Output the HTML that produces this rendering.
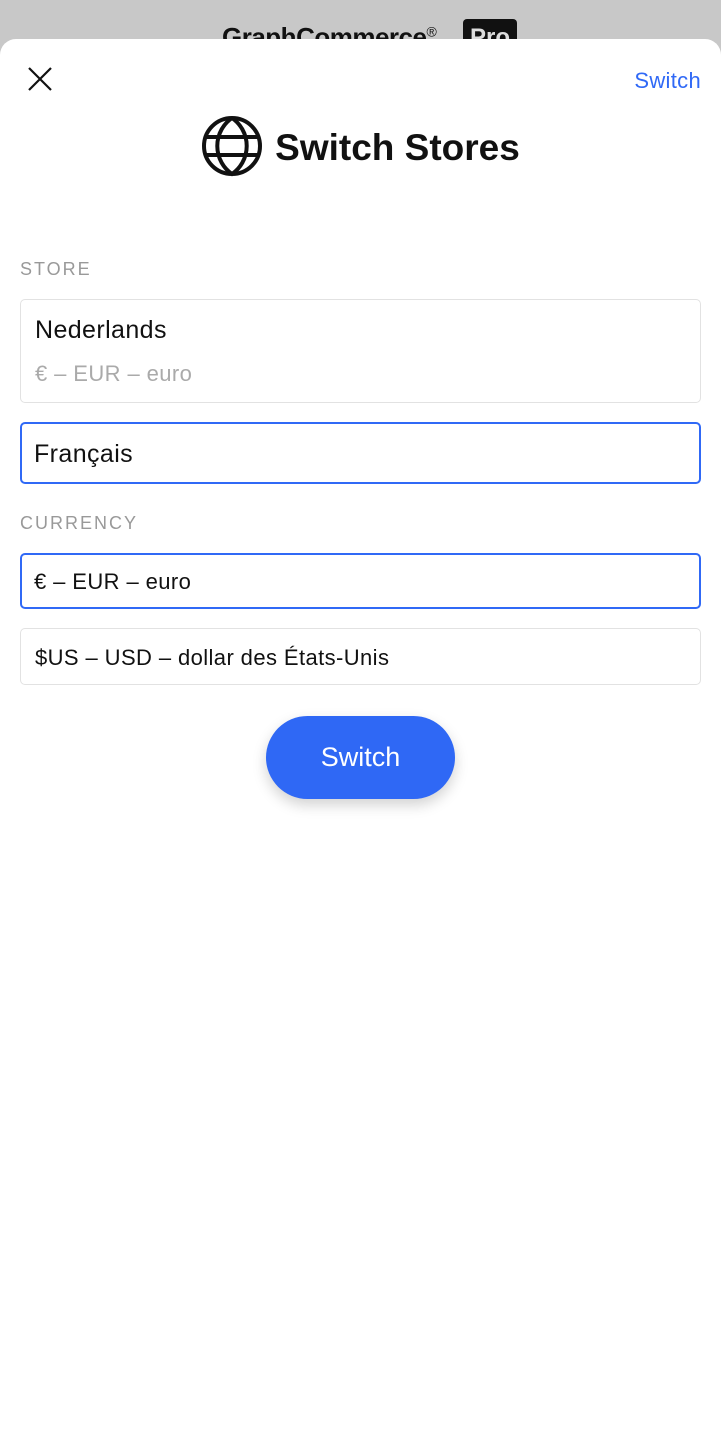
<!DOCTYPE html>
<html><head><meta charset="utf-8"><style>
html,body{margin:0;padding:0;width:721px;height:1440px;overflow:hidden;background:#c8c8c8;font-family:"Liberation Sans",sans-serif;}
.top{position:absolute;left:0;top:0;width:721px;height:60px;}
.logo{position:absolute;left:222px;top:22px;font-size:26px;font-weight:bold;color:#111;letter-spacing:-0.5px;}
.pro{position:absolute;left:463px;top:19px;width:54px;height:34px;background:#111;border-radius:4px;color:#ddd;font-weight:bold;font-size:24px;text-align:center;line-height:38px;}
.sheet{position:absolute;left:0;top:39px;width:721px;height:1401px;background:#fff;border-radius:16px 16px 0 0;}
.close{position:absolute;left:28px;top:28px;}
.sw{position:absolute;right:20px;top:29px;color:#3069f6;font-size:22px;letter-spacing:0.3px;}
.title{position:absolute;left:0;width:721px;top:80px;text-align:center;font-size:37px;font-weight:bold;color:#111;}
.title svg{vertical-align:middle;margin-right:12px;position:relative;top:-4px}
.lbl{position:absolute;left:20px;font-size:18px;letter-spacing:2px;color:#999;}
.box{position:absolute;left:20px;width:681px;box-sizing:border-box;border:1.5px solid #e2e2e2;border-radius:5px;padding-left:14px;color:#111;letter-spacing:0.4px;}
.sel{border:2.5px solid #3069f6;padding-left:12px;}
.btn{position:absolute;left:266px;top:677px;width:189px;height:83px;border-radius:42px;background:#2f68f5;color:#fff;font-size:27px;text-align:center;line-height:83px;box-shadow:0 6px 14px rgba(0,0,0,0.18);}
</style></head><body>
<div class="top"><div class="logo">GraphCommerce<sup style="font-size:14px;font-weight:normal">®</sup></div><div class="pro">Pro</div></div>
<div class="sheet">
<svg class="close" width="24" height="24" viewBox="0 0 24 24"><path d="M1 1L23 23M23 1L1 23" stroke="#111" stroke-width="2.2"/></svg>
<div class="sw">Switch</div>
<div class="title"><svg width="62" height="62" viewBox="0 0 62 62" fill="none" stroke="#111" stroke-width="4"><circle cx="31" cy="31" r="28"/><path d="M31 3A34 34 0 0 0 31 59A34 34 0 0 0 31 3"/><path d="M4 22H58M4 40H58"/></svg>Switch Stores</div>
<div class="lbl" style="top:220px">STORE</div>
<div class="box" style="top:260px;height:104px;"><div style="font-size:25px;margin-top:16px">Nederlands</div><div style="font-size:22px;color:#aaa;margin-top:16px">€ – EUR – euro</div></div>
<div class="box sel" style="top:383px;height:62px;font-size:25px;line-height:60px">Français</div>
<div class="lbl" style="top:474px">CURRENCY</div>
<div class="box sel" style="top:514px;height:56px;font-size:22px;line-height:54px">€ – EUR – euro</div>
<div class="box" style="top:589px;height:57px;font-size:22px;line-height:57px">$US – USD – dollar des États-Unis</div>
<div class="btn">Switch</div>
</div>
</body></html>
